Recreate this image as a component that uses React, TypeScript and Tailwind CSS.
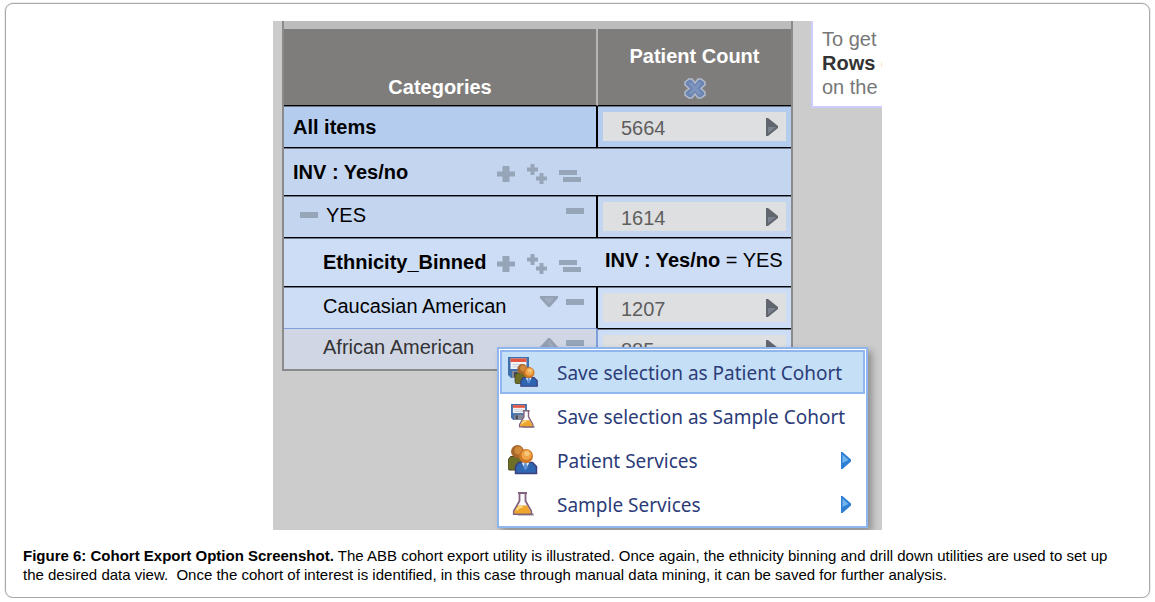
import React from 'react';

const ICON_GREY = '#97a5b8';

function PlusIcon() {
  return (
    <svg width="18" height="16" viewBox="0 0 18 16" fill={ICON_GREY}>
      <path d="M5.500 0h7v5.500H18v5H12.500V16h-7v-5.500H0v-5h5.500z" />
    </svg>
  );
}

function DoublePlusIcon() {
  return (
    <svg width="20" height="20" viewBox="0 0 20 20" fill={ICON_GREY}>
      <path d="M3.500 0h4v3.500H11v4H7.500V11h-4V7.500H0v-4h3.500z" />
      <path d="M12.500 9h4v3.500H20v4h-3.500V20h-4v-3.500H9v-4h3.500z" />
    </svg>
  );
}

function LinesIcon() {
  return (
    <svg width="22" height="12" viewBox="0 0 22 12" fill={ICON_GREY}>
      <path d="M0 0h18v5H0zM4 7h18v5H4z" />
    </svg>
  );
}

function MinusIcon() {
  return (
    <svg width="18" height="6" viewBox="0 0 18 6">
      <path d="M0 0h18v6H0z" fill={ICON_GREY} />
    </svg>
  );
}

function SortIcon({ up }: { up?: boolean }) {
  return (
    <svg width="18" height="11" viewBox="0 0 18 11">
      <path d={up ? 'M8 0h2L18 9v2H0V9z' : 'M0 0h18v2L10 11H8L0 2z'} fill="#94a1b5" />
      <path d={up ? 'M9 3l5 6H9z' : 'M4 2h10L9 8z'} fill="#a0adbf" />
    </svg>
  );
}

function ArrowIcon() {
  return (
    <svg width="12" height="18" viewBox="0 0 12 18">
      <path d="M0 0h2L12 8v2L2 18H0z" fill="#60656e" />
      <path d="M2 9l8 0l-8 6.500z" fill="#7a828f" />
    </svg>
  );
}

function SubmenuIcon() {
  return (
    <svg width="10" height="17" viewBox="0 0 10 17">
      <path d="M0 0h1.500L10 7.500v2L1.500 17H0z" fill="#2f80d2" />
      <path d="M1.500 2.500l6 5.500l-6 3z" fill="#72b4ec" />
    </svg>
  );
}

function RemoveIcon() {
  return (
    <svg width="22" height="21" viewBox="0 0 22 21">
      <path
        d="M5 1h3l3 4l3-4h3l4 3v3l-4 3.500l4 3.500v3l-4 3h-3l-3-4l-3 4H5l-4-3v-3l4-3.500L1 7V4z"
        fill="#6d85b2"
        stroke="#b2bccd"
        strokeWidth="1.500"
      />
      <path d="M6 5l10 11M16 5L6 16" stroke="#7d94bd" strokeWidth="3" />
    </svg>
  );
}

function Floppy() {
  return (
    <g>
      <path d="M0 0h21v21H3l-3-3z" fill="#3f6fac" />
      <path d="M2.500 1.500h16V12h-16z" fill="#f1f3f6" />
      <path d="M2.500 1.500h16v3.500h-16z" fill="#e2563f" />
      <path d="M4.500 7.500h12M4.500 9.800h12" stroke="#c6cbd4" />
      <path d="M4 14h12v7H4z" fill="#858b98" />
      <path d="M6 15h3v5H6z" fill="#444a58" />
    </g>
  );
}

function Flask() {
  return (
    <g>
      <path d="M3 21h17l1 2.500H5z" fill="#8d8c92" />
      <path d="M5 1h9M6.500 1v8L.8 19v3h17.400v-3L12.500 9V1z" fill="#fbfafc" stroke="#82627c" strokeWidth="1.800" />
      <path d="M5 13.500h9l3.500 6v2h-16v-2z" fill="#f0a62c" />
      <path d="M3.500 18l3-3h3" fill="none" stroke="#ffdc84" strokeWidth="2" />
    </g>
  );
}

function People() {
  return (
    <g>
      <path d="M0 15l2.500-3.500h9l2 4V25H1l-1-2z" fill="#6d6f26" stroke="#46451c" />
      <circle cx="9.500" cy="6.500" r="6.500" fill="#a7662a" />
      <circle cx="10.500" cy="5.500" r="4" fill="#cf8a3c" />
      <path d="M7.500 21.500l3-4h14l4 4V28.500h-21z" fill="#2f66b2" stroke="#3a3f7c" strokeWidth="1.500" />
      <path d="M13.500 17.500h8l-4 7z" fill="#dfe9f7" />
      <path d="M16.500 18h2l1 5l-2 2l-2-2z" fill="#5e92d6" />
      <circle cx="18" cy="11" r="7" fill="#cf7726" />
      <circle cx="18.500" cy="10" r="5" fill="#efa548" />
      <circle cx="19" cy="8.500" r="2.500" fill="#f8c77c" />
    </g>
  );
}

function SavePatientIcon() {
  return (
    <svg className="shrink-0" width="30" height="30" viewBox="0 0 30 30">
      <Floppy />
      <g transform="translate(7 7) scale(0.78)">
        <People />
      </g>
    </svg>
  );
}

function SaveSampleIcon() {
  return (
    <svg className="shrink-0" width="30" height="30" viewBox="0 0 30 30">
      <g transform="translate(3 3) scale(0.76)">
        <Floppy />
      </g>
      <g transform="translate(11 9) scale(0.76)">
        <Flask />
      </g>
    </svg>
  );
}

function PeopleIcon() {
  return (
    <svg className="shrink-0" width="30" height="30" viewBox="0 0 30 30">
      <People />
    </svg>
  );
}

function FlaskIcon() {
  return (
    <svg className="shrink-0" width="30" height="30" viewBox="0 0 30 30">
      <g transform="translate(5 3)">
        <Flask />
      </g>
    </svg>
  );
}

function CountButton({ value }: { value: string }) {
  return (
    <button className="flex h-[29px] w-full items-center justify-between bg-[#dedfe0] pl-[18px] pr-2 text-[#5e5e5e]">
      <span className="pt-0.5">{value}</span>
      <ArrowIcon />
    </button>
  );
}

function DrillButtons() {
  return (
    <span className="flex items-center gap-3 pt-1">
      <button aria-label="Add"><PlusIcon /></button>
      <button aria-label="Add nested"><DoublePlusIcon /></button>
      <button aria-label="Flatten" className="pt-1"><LinesIcon /></button>
    </span>
  );
}

const menuItems = [
  { label: 'Save selection as Patient Cohort', icon: <SavePatientIcon />, active: true },
  { label: 'Save selection as Sample Cohort', icon: <SaveSampleIcon /> },
  { label: 'Patient Services', icon: <PeopleIcon />, submenu: true },
  { label: 'Sample Services', icon: <FlaskIcon />, submenu: true },
];

function ContextMenu() {
  return (
    <div
      role="menu"
      className="absolute left-[224px] top-[326px] w-[371px] border-2 border-[#8fb6ef] bg-white px-px pt-px font-['Noto_Sans',sans-serif] text-[19px] text-[#2c3c78] shadow-[4px_4px_7px_rgba(0,0,0,0.3)]"
    >
      {menuItems.map((item) => (
        <button
          key={item.label}
          role="menuitem"
          className={`flex h-11 w-full items-center border-2 pl-[6px] pr-3 text-left ${
            item.active ? 'border-[#8fb6ef] bg-[#c4dff6]' : 'border-transparent'
          }`}
        >
          {item.icon}
          <span className="flex-1 whitespace-nowrap pl-[19px] pt-0.5">{item.label}</span>
          {item.submenu && <SubmenuIcon />}
        </button>
      ))}
    </div>
  );
}

function CohortTable() {
  return (
    <div className="w-[511px] shrink-0 border-x-2 border-b-2 border-[#8b8b8b]">
      <div className="h-2 bg-[#bcbcbc]" />
      <table className="w-full table-fixed border-separate border-spacing-0 text-black">
        <thead className="bg-[#7f7d7b] text-white">
          <tr className="h-[77px]">
            <th className="w-[314px] border-b border-r-2 border-b-black border-r-[#b5b5b5] pb-1.5 align-bottom font-bold">Categories</th>
            <th className="border-b border-black pb-1.5 align-bottom font-bold">
              Patient Count
              <button aria-label="Remove column" className="mx-auto mt-2.5 block"><RemoveIcon /></button>
            </th>
          </tr>
        </thead>
        <tbody>
          <tr className="h-[42px] bg-[#b4cdef]">
            <th className="border-b border-r-2 border-black pl-[9px] text-left font-bold shadow-[inset_0_1px_0_#69788c]">All items</th>
            <td className="border-b border-black px-[5px] shadow-[inset_0_1px_0_#69788c]"><CountButton value="5664" /></td>
          </tr>
          <tr className="h-12 bg-[#c4d5ef]">
            <th colSpan={2} className="border-b border-black pl-[9px] text-left font-bold shadow-[inset_0_1px_0_#69788c]">
              <div className="flex items-center">
                <span className="w-[204px]">INV : Yes/no</span>
                <DrillButtons />
              </div>
            </th>
          </tr>
          <tr className="h-[42px] bg-[#c4d5ef]">
            <td className="border-b border-r-2 border-black pl-4 pr-3 shadow-[inset_0_1px_0_#69788c]">
              <div className="flex items-center pb-1">
                <button aria-label="Collapse YES"><MinusIcon /></button>
                <span className="flex-1 pl-2">YES</span>
                <button aria-label="Remove YES" className="pb-2"><MinusIcon /></button>
              </div>
            </td>
            <td className="border-b border-black px-[5px] shadow-[inset_0_1px_0_#69788c]"><CountButton value="1614" /></td>
          </tr>
          <tr className="h-[49px] bg-[#cdddf5]">
            <th className="border-b border-black pl-[39px] text-left font-bold shadow-[inset_0_1px_0_#69788c]">
              <div className="flex items-center">
                <span className="w-[174px]">Ethnicity_Binned</span>
                <DrillButtons />
              </div>
            </th>
            <td className="whitespace-nowrap border-b border-black pb-1 pl-[7px] shadow-[inset_0_1px_0_#69788c]">
              <b>INV : Yes/no</b> = YES
            </td>
          </tr>
          <tr className="h-[42px] bg-[#cdddf5]">
            <td className="border-b border-r-2 border-b-[#7f9fdc] border-r-black pl-[39px] pr-3 shadow-[inset_0_1px_0_#69788c]">
              <div className="flex items-center pb-1">
                <span className="flex-1">Caucasian American</span>
                <span className="flex items-center gap-2 pb-2">
                  <button aria-label="Move down"><SortIcon /></button>
                  <button aria-label="Remove Caucasian American"><MinusIcon /></button>
                </span>
              </div>
            </td>
            <td className="border-b border-black px-[5px] shadow-[inset_0_1px_0_#69788c]"><CountButton value="1207" /></td>
          </tr>
          <tr className="h-10 bg-[#cdddf5]">
            <td className="border-r-2 border-[#7f9fdc] bg-[#d1d6e5] pl-[39px] pr-3 text-[#333]">
              <div className="flex items-center pb-1">
                <span className="flex-1">African American</span>
                <span className="flex items-center gap-2 pb-2">
                  <button aria-label="Move up"><SortIcon up /></button>
                  <button aria-label="Remove African American"><MinusIcon /></button>
                </span>
              </div>
            </td>
            <td className="px-[5px] shadow-[inset_0_1px_0_#69788c]"><CountButton value="885" /></td>
          </tr>
        </tbody>
      </table>
    </div>
  );
}

export default function App() {
  return (
    <figure className="mx-[5px] mt-[3px] rounded-lg border border-[#a9a9a9] bg-white px-[17px] pb-[13px] pt-[17px] font-['Liberation_Sans',Arial,sans-serif] ring-1 ring-[#ececec]">
      <div className="relative mx-auto flex min-h-[509px] w-full max-w-[609px] items-start overflow-hidden bg-[#cccccc] pl-[9px] text-[20px] leading-6">
        <CohortTable />
        <p className="ml-[18px] min-w-0 flex-1 overflow-hidden whitespace-nowrap border-b-2 border-l-2 border-[#ccccff] bg-white pb-[7px] pl-[9px] pt-1.5 text-[#777]">
          To get
          <br />
          <b className="text-[#333]">Rows</b> or
          <br />
          on the
        </p>
        <ContextMenu />
      </div>
      <figcaption className="mt-4 text-[15px] leading-[19px] text-black">
        <b>Figure 6: Cohort Export Option Screenshot.</b> The ABB cohort export utility is illustrated. Once again, the ethnicity binning and drill down utilities are used to set up the desired data view.&nbsp; Once the cohort of interest is identified, in this case through manual data mining, it can be saved for further analysis.
      </figcaption>
    </figure>
  );
}
